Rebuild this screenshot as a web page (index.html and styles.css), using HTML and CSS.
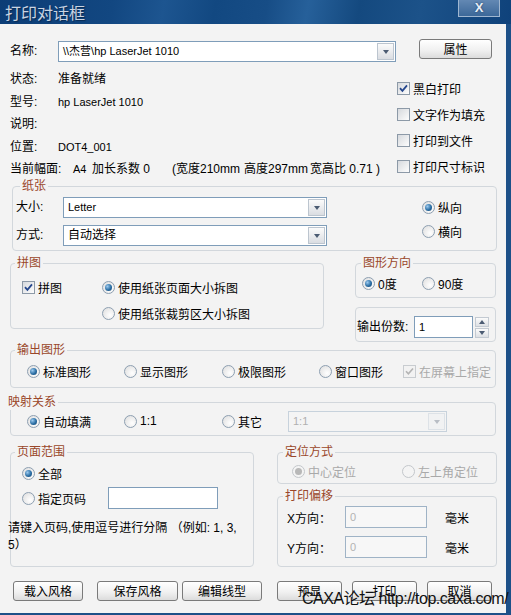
FILE: index.html
```html
<!DOCTYPE html>
<html>
<head>
<meta charset="utf-8">
<link rel="stylesheet" href="styles.css">
</head>
<body>
<div class="window">
  <div class="titlebar">
    <span class="title">打印对话框</span>
    <span class="close">X</span>
  </div>
  <div class="client">
    <div class="name-row">
      <span class="lbl">名称:</span>
      <div class="combo name-combo"><span class="cv lat">\\杰营\hp LaserJet 1010</span><span class="cbtn"><i class="tri"></i></span></div>
      <div class="btn prop">属性</div>
    </div>

    <div class="info">
      <div class="info-left">
        <div class="irow"><span class="lbl">状态:</span><span>准备就绪</span></div>
        <div class="irow"><span class="lbl">型号:</span><span class="lat">hp LaserJet 1010</span></div>
        <div class="irow"><span class="lbl">说明:</span><span></span></div>
        <div class="irow"><span class="lbl">位置:</span><span class="lat">DOT4_001</span></div>
        <div class="irow"><span class="s1">当前幅面:</span><span class="s2 lat">A4</span><span class="s3">加长系数 0</span><span class="s4">(宽度210mm</span><span class="s5">高度297mm</span><span>宽高比 0.71 )</span></div>
      </div>
      <div class="info-right">
        <div class="ck"><span class="cb"><svg width="9" height="9" viewBox="0 0 9 9"><path d="M1 4.2 L3.4 6.8 L8 1.4" fill="none" stroke="#24468c" stroke-width="1.8"/></svg></span>黑白打印</div>
        <div class="ck"><span class="cb"></span>文字作为填充</div>
        <div class="ck"><span class="cb"></span>打印到文件</div>
        <div class="ck"><span class="cb"></span>打印尺寸标识</div>
      </div>
    </div>

    <div class="group paper">
      <span class="legend lg-paper">纸张</span>
      <div class="paper-fields">
        <span class="lbl">大小:</span>
        <div class="combo"><span class="cv lat">Letter</span><span class="cbtn"><i class="tri"></i></span></div>
        <span class="lbl">方式:</span>
        <div class="combo"><span class="cv">自动选择</span><span class="cbtn"><i class="tri"></i></span></div>
      </div>
      <div class="orient">
        <div class="ritem"><span class="rd on"></span>纵向</div>
        <div class="ritem"><span class="rd"></span>横向</div>
      </div>
    </div>

    <div class="rowD">
      <div class="group pintu">
        <span class="legend lg-4">拼图</span>
        <div class="ck"><span class="cb"><svg width="9" height="9" viewBox="0 0 9 9"><path d="M1 4.2 L3.4 6.8 L8 1.4" fill="none" stroke="#24468c" stroke-width="1.8"/></svg></span>拼图</div>
        <div class="ritem"><span class="rd on"></span>使用纸张页面大小拆图</div>
        <div></div>
        <div class="ritem"><span class="rd"></span>使用纸张裁剪区大小拆图</div>
      </div>
      <div class="rightcol">
        <div class="group dir">
          <span class="legend lg-5">图形方向</span>
          <div class="ritem"><span class="rd on"></span>0度</div>
          <div class="ritem"><span class="rd"></span>90度</div>
        </div>
        <div class="group copies">
          <span class="lbl">输出份数:</span>
          <div class="tb">1</div>
          <div class="spin">
            <span class="sb"><i class="tri up"></i></span>
            <span class="sb"><i class="tri"></i></span>
          </div>
        </div>
      </div>
    </div>

    <div class="group outg">
      <span class="legend lg-4">输出图形</span>
      <div class="ritem w97"><span class="rd on"></span>标准图形</div>
      <div class="ritem w98"><span class="rd"></span>显示图形</div>
      <div class="ritem w97"><span class="rd"></span>极限图形</div>
      <div class="ritem w84"><span class="rd"></span>窗口图形</div>
      <div class="ck dis"><span class="cb"><svg width="9" height="9" viewBox="0 0 9 9"><path d="M1 4.2 L3.4 6.8 L8 1.4" fill="none" stroke="#b4b4b4" stroke-width="1.6"/></svg></span>在屏幕上指定</div>
    </div>

    <div class="group mapg">
      <span class="legend lg-map">映射关系</span>
      <div class="ritem w97"><span class="rd on"></span>自动填满</div>
      <div class="ritem w98"><span class="rd"></span>1:1</div>
      <div class="ritem w66"><span class="rd"></span>其它</div>
      <div class="combo dcombo"><span class="cv">1:1</span><span class="cbtn"><i class="tri"></i></span></div>
    </div>

    <div class="rowG">
      <div class="group pager">
        <span class="legend lg-4">页面范围</span>
        <div class="ritem"><span class="rd on"></span>全部</div>
        <div class="prow2">
          <div class="ritem w86"><span class="rd"></span>指定页码</div>
          <div class="tb pages"></div>
        </div>
        <div class="note">请键入页码,使用逗号进行分隔 （例如: 1, 3,<br>5）</div>
      </div>
      <div class="rightcol2">
        <div class="group posg">
          <span class="legend lg-5">定位方式</span>
          <div class="ritem dis w110"><span class="rd on"></span>中心定位</div>
          <div class="ritem dis"><span class="rd"></span>左上角定位</div>
        </div>
        <div class="group offs">
          <span class="legend lg-5">打印偏移</span>
          <div class="orow"><span class="lbl">X方向：</span><div class="tb dtb">0</div><span class="mm">毫米</span></div>
          <div class="orow"><span class="lbl">Y方向：</span><div class="tb dtb">0</div><span class="mm">毫米</span></div>
        </div>
      </div>
    </div>

    <div class="btnrow">
      <div class="btn b1">载入风格</div>
      <div class="btn b2">保存风格</div>
      <div class="btn b3">编辑线型</div>
      <div class="btn b4">预显</div>
      <div class="btn b5">打印</div>
      <div class="btn b6">取消</div>
    </div>
  </div>
  <div class="watermark">CAXA论坛 http://top.caxa.com/</div>
</div>
</body>
</html>
```

FILE: styles.css
```css
* { box-sizing: border-box; }
html, body { margin: 0; padding: 0; }
body {
  width: 511px;
  height: 615px;
  overflow: hidden;
  background: #f3f3f3;
  font-family: "Liberation Sans", "Noto Sans CJK SC", sans-serif;
  font-size: 12px;
  color: #000;
}
.window {
  position: relative;
  width: 511px;
  height: 615px;
  display: flex;
  flex-direction: column;
}
.titlebar {
  flex: none;
  height: 24px;
  display: flex;
  align-items: flex-start;
  background: linear-gradient(100deg, #0c3d76 0%, #124781 22%, #1d5590 32%, #124881 42%, #174d86 52%, #26609a 60%, #14497f 70%, #1c5289 82%, #0f427b 100%);
}
.title {
  padding-left: 5px;
  font-family: "Noto Sans CJK SC", sans-serif;
  font-size: 16px;
  line-height: 25px;
  color: #c9d4e2;
  text-shadow: 1px 1px 1px #082a52;
}
.close {
  margin-left: auto;
  margin-right: 11px;
  width: 42px;
  height: 17px;
  border: 1px solid #9fb6d0;
  border-top: none;
  background: linear-gradient(#6388b3, #3c6899);
  color: #e6edf5;
  font: bold 13px/16px "Liberation Sans", sans-serif;
  text-align: center;
  text-shadow: 0 0 2px #1c3c66;
}
.client {
  flex: 1;
  display: flex;
  flex-direction: column;
  background: #f3f3f3;
  border-right: 5px solid #1d5088;
  border-bottom: 2px solid #1d5088;
}
.lat { font-size: 11px; }
.lbl { flex: none; }

/* combobox */
.combo {
  display: flex;
  height: 21px;
  border: 1px solid #7f9db9;
  background: #fff;
}
.cv {
  flex: 1;
  padding-left: 4px;
  line-height: 19px;
  white-space: nowrap;
  overflow: hidden;
}
.cbtn {
  flex: none;
  width: 17px;
  margin: 1px;
  border: 1px solid #bcc5cf;
  background: linear-gradient(#fbfbfb, #dadde2);
  display: flex;
  align-items: center;
  justify-content: center;
}
.tri {
  width: 0;
  height: 0;
  border-left: 3px solid transparent;
  border-right: 3px solid transparent;
  border-top: 4px solid #4b5b72;
}
.tri.up {
  border-top: none;
  border-bottom: 4px solid #4b5b72;
}

/* button */
.btn {
  display: flex;
  align-items: center;
  justify-content: center;
  height: 20px;
  border: 1px solid #7a7a7a;
  border-radius: 3px;
  background: linear-gradient(#ffffff, #f1f1f1 55%, #dcdcdc);
  font-family: "Noto Sans CJK SC", sans-serif;
  line-height: 18px;
}

/* name row */
.name-row {
  display: flex;
  align-items: flex-start;
  margin-top: 15px;
  padding-left: 10px;
  height: 23px;
}
.name-row .lbl { width: 48px; line-height: 21px; margin-top: 2px; }
.name-combo { width: 338px; margin-top: 2px; }
.prop { width: 73px; margin-left: 23px; }

/* info */
.info { display: flex; height: 124px; padding-top: 6px; }
.info-left { width: 397px; padding-left: 10px; }
.irow { display: flex; height: 22.5px; line-height: 22.5px; white-space: nowrap; }
.irow .lbl { width: 48px; }
.s1 { width: 63px; }
.s2 { width: 19px; }
.s3 { width: 80px; }
.s4 { width: 72px; }
.s5 { width: 66px; }
.info-right { padding-top: 7px; }

/* checkbox */
.ck { display: flex; align-items: center; gap: 3px; height: 26px; white-space: nowrap; }
.cb {
  flex: none;
  width: 13px;
  height: 13px;
  border: 1px solid #8c99a7;
  background: linear-gradient(135deg, #d6d9dd, #fdfdfd);
  display: flex;
  align-items: center;
  justify-content: center;
}
.ck.dis { color: #a9a9a9; }
.ck.dis .cb { border-color: #c8ccd0; background: #f2f2f2; }

/* radio */
.ritem { display: flex; align-items: center; gap: 3px; height: 24px; white-space: nowrap; }
.rd {
  flex: none;
  width: 13px;
  height: 13px;
  border-radius: 50%;
  border: 1px solid #8d9fb1;
  background: radial-gradient(circle at 65% 65%, #ffffff, #dcdcdc);
  display: flex;
  align-items: center;
  justify-content: center;
}
.rd.on::after {
  content: "";
  width: 7px;
  height: 7px;
  border-radius: 50%;
  background: radial-gradient(circle at 35% 35%, #9ccaef, #2a6ea4 55%, #113f6a);
}
.ritem.dis { color: #a9a9a9; }
.ritem.dis .rd { border-color: #c3c7cb; background: #f4f4f4; }
.ritem.dis .rd.on::after { background: #b8b8b8; }

.w66 { width: 66px; }
.w84 { width: 84px; }
.w86 { width: 86px; }
.w97 { width: 97px; }
.w98 { width: 98px; }
.w110 { width: 110px; }

/* group */
.group {
  position: relative;
  border: 1px solid #d2d7dc;
  border-radius: 4px;
}
.legend {
  position: absolute;
  top: -8px;
  padding: 0 2px;
  line-height: 15px;
  background: #f3f3f3;
  color: #9a472a;
  white-space: nowrap;
}
.lg-paper { left: 7px; }
.lg-4 { left: 4px; }
.lg-5 { left: 5px; }
.lg-map { left: -5px; }

/* paper */
.paper {
  margin-left: 12px;
  width: 485px;
  height: 65px;
  display: flex;
  padding: 10px 0 0 3px;
}
.paper-fields {
  display: grid;
  grid-template-columns: 47px 264px;
  grid-auto-rows: 21px;
  row-gap: 7px;
}
.paper-fields .lbl { line-height: 21px; }
.orient { margin-left: 95px; margin-top: -2px; }

/* row D */
.rowD { display: flex; margin-top: 12px; padding-left: 10px; }
.pintu {
  width: 314px;
  height: 66px;
  padding: 10px 0 0 11px;
  display: grid;
  grid-template-columns: 80px auto;
  grid-auto-rows: 26px;
}
.pintu .ck, .pintu .ritem { height: 26px; }
.rightcol { margin-left: 31px; width: 141px; }
.dir { height: 35px; padding: 7px 0 0 6px; display: flex; }
.dir .ritem { width: 60px; }
.copies {
  margin-top: 9px;
  height: 35px;
  display: flex;
  align-items: flex-start;
  padding: 8px 0 0 1px;
}
.copies .lbl { width: 57px; line-height: 22px; }
.tb {
  flex: none;
  height: 22px;
  border: 1px solid #7f9db9;
  background: #fff;
  padding-left: 4px;
  line-height: 20px;
  font-size: 11px;
}
.copies .tb { width: 59px; }
.spin {
  margin-left: 2px;
  margin-top: 1px;
  width: 14px;
  height: 21px;
  display: flex;
  flex-direction: column;
  gap: 1px;
}
.sb {
  flex: 1;
  border: 1px solid #c3cad2;
  background: linear-gradient(#fbfbfb, #dde0e4);
  display: flex;
  align-items: center;
  justify-content: center;
}

/* output */
.outg {
  margin: 8px 0 0 10px;
  width: 486px;
  height: 38px;
  padding: 8px 0 0 16px;
  display: flex;
}
.outg .ck { height: 24px; }
.mapg {
  margin: 14px 0 0 10px;
  width: 486px;
  height: 34px;
  padding: 7px 0 0 16px;
  display: flex;
  align-items: flex-start;
}
.mapg .ritem { height: 22px; }
.dcombo {
  width: 159px;
  margin-top: 1px;
  border-color: #c7d2dc;
  background: #f4f4f4;
  color: #b0b0b0;
}
.dcombo .cv { font-size: 11px; }
.dcombo .cbtn { border-color: #dde2e7; background: #f1f2f3; }
.dcombo .tri { border-top-color: #b9bec5; }

/* row G */
.rowG { display: flex; margin-top: 16px; padding-left: 10px; }
.pager { width: 244px; height: 115px; padding: 8px 0 0 11px; }
.prow2 { display: flex; align-items: center; height: 26px; }
.pages { width: 110px; }
.note {
  margin: 9px 0 0 -14px;
  line-height: 17px;
  white-space: nowrap;
}
.rightcol2 { margin-left: 23px; width: 220px; }
.posg { height: 32px; padding: 7px 0 0 14px; display: flex; }
.posg .ritem { height: 22px; }
.offs { margin-top: 12px; height: 71px; padding: 5px 0 0 9px; }
.orow { display: flex; align-items: center; height: 30px; }
.orow .lbl { width: 58px; }
.dtb { width: 82px; background: #f7f7f7; border-color: #9fb3c6; color: #b3b3b3; }
.mm { margin-left: 18px; }

/* buttons */
.btnrow { display: flex; margin-top: 14px; padding-left: 13px; }
.b1 { width: 70px; }
.b2 { width: 81px; margin-left: 14px; }
.b3 { width: 80px; margin-left: 4px; }
.b4 { width: 65px; margin-left: 15px; }
.b5 { width: 65px; margin-left: 10px; }
.b6 { width: 65px; margin-left: 10px; }

.watermark {
  position: absolute;
  left: 302px;
  top: 589px;
  font-family: "Liberation Sans", "Noto Sans CJK SC", sans-serif;
  font-size: 16px;
  line-height: 20px;
  letter-spacing: -0.5px;
  color: #111;
  white-space: nowrap;
}
```
